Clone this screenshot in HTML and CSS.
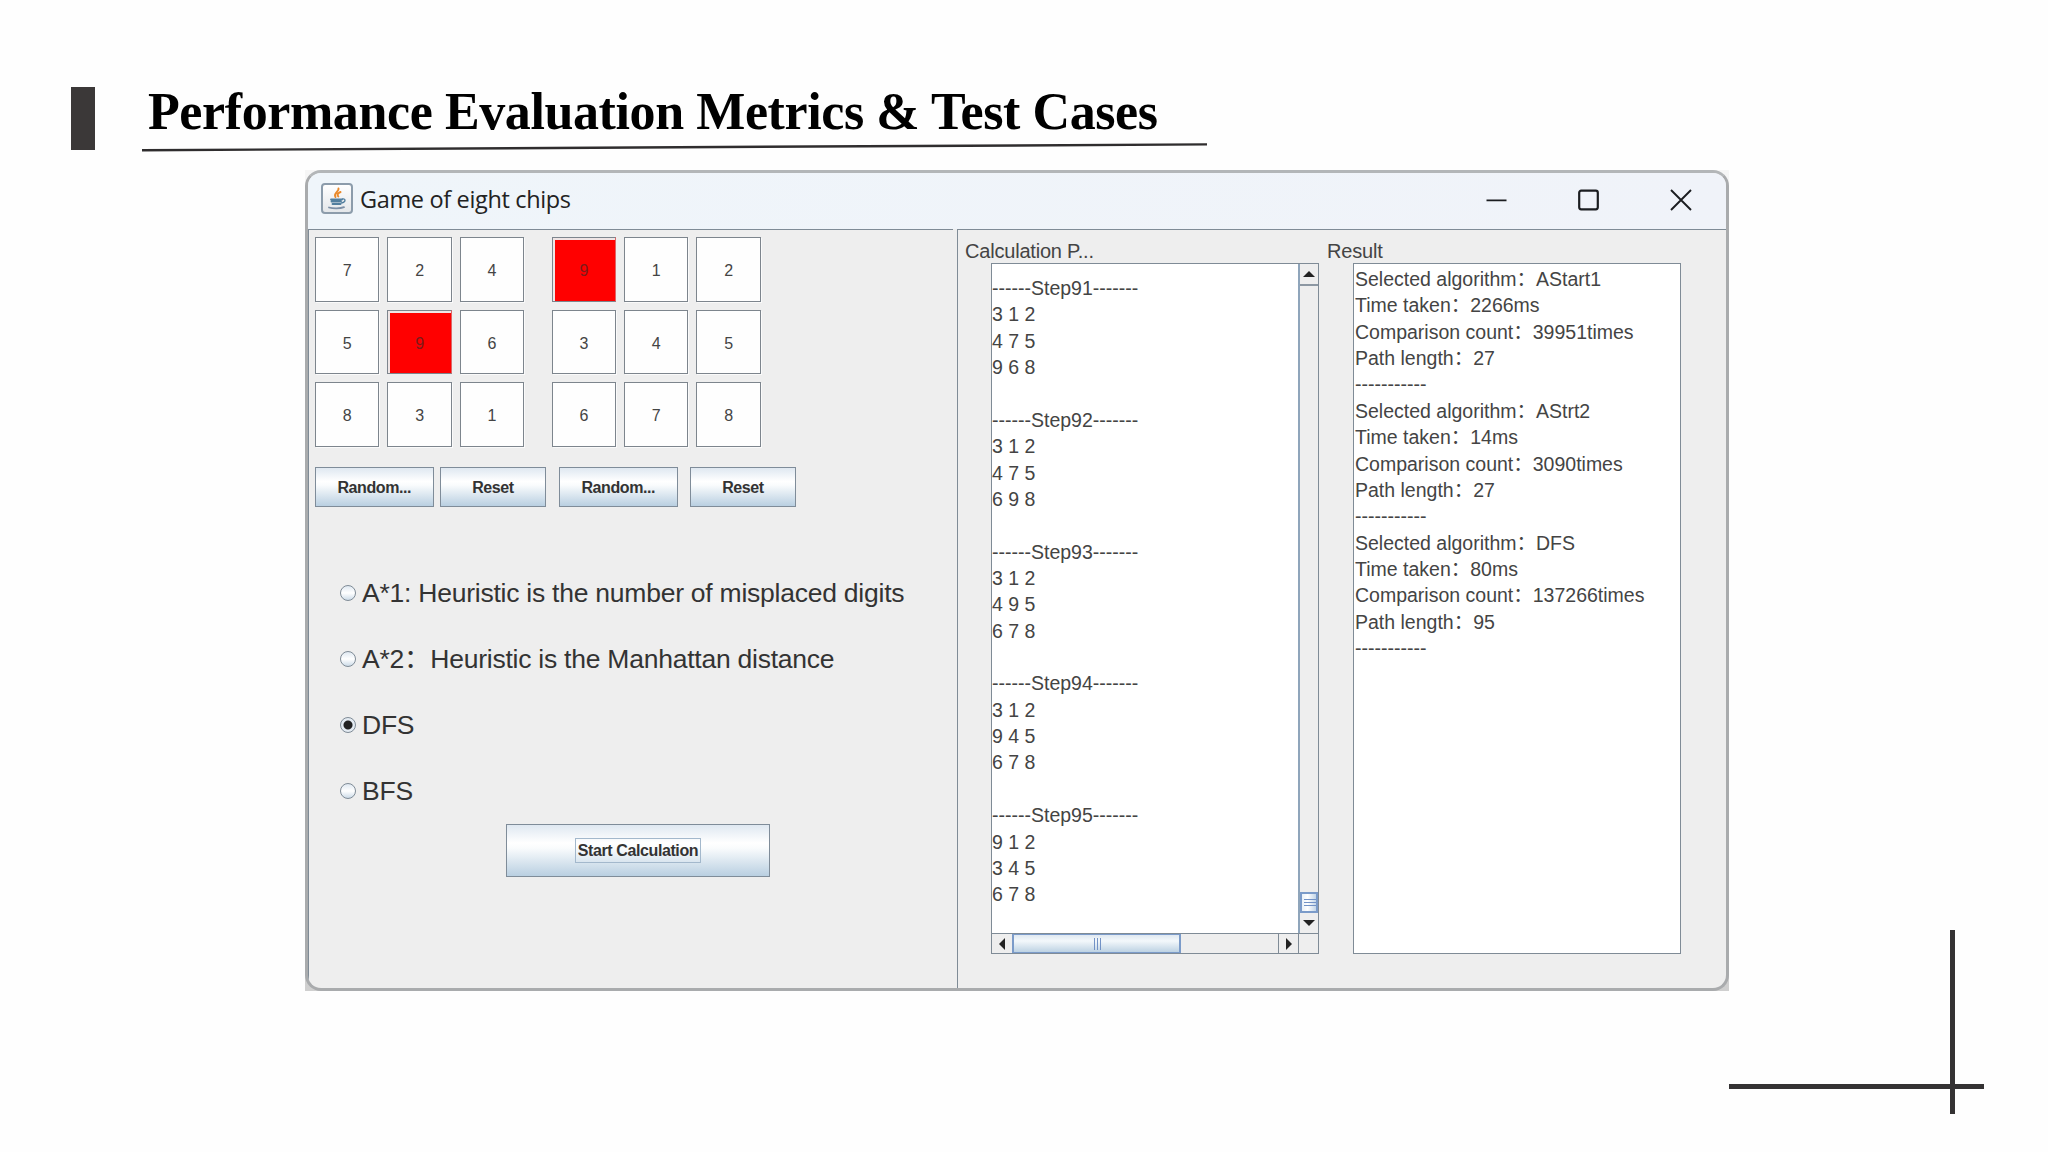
FILE: index.html
```html
<!DOCTYPE html>
<html lang="en">
<head>
  <meta charset="UTF-8" />
  <meta name="viewport" content="width=device-width, initial-scale=1.0" />
  <title>Performance Evaluation Metrics &amp; Test Cases</title>
  <link rel="stylesheet" href="styles.css">
</head>
<body>
  <div class="slide">
    <header class="heading">
      <div class="heading-bar"></div>
      <div class="heading-text">
        <h1>Performance Evaluation Metrics &amp; Test Cases</h1>
        <svg class="underline" width="1066" height="9" viewBox="0 0 1066 9">
          <line x1="0" y1="7.2" x2="1065" y2="1.4" stroke="#2f2d2e" stroke-width="2.4" />
        </svg>
      </div>
    </header>

    <div class="window-frame">
      <div class="window">
        <div class="title-bar">
          <div class="java-icon">
            <svg width="26" height="26" viewBox="0 0 26 26" fill="none" stroke-linecap="round">
              <path d="M14.5 2.5c1 3-5.5 4.5-3 8.5M16.5 6c-3 1.2-3.6 2.5-2.2 4.5" stroke="#ea8a2c" stroke-width="2" />
              <path d="M7 13.5h11M7.5 15.5h9.5M8.5 18h8" stroke="#527f9f" stroke-width="1.8" />
              <path d="M18.5 13c3.5-.8 3.5 3.2-1 4" stroke="#527f9f" stroke-width="1.3" />
              <path d="M5 21.5c4 1.2 11 1.2 15-.3" stroke="#7c8fa6" stroke-width="1.8" />
            </svg>
          </div>
          <div class="title">Game of eight chips</div>
          <div class="window-buttons">
            <svg width="22" height="22" viewBox="0 0 22 22"><path d="M1.5 11.3h20" stroke="#1b1d20" stroke-width="1.8" /></svg>
            <svg width="22" height="22" viewBox="0 0 22 22"><rect x="1.2" y="1.7" width="18.6" height="18.6" rx="2" fill="none" stroke="#1b1d20" stroke-width="2.2" /></svg>
            <svg width="22" height="22" viewBox="0 0 22 22"><path d="M1 1l20 20M21 1l-20 20" stroke="#1b1d20" stroke-width="1.9" /></svg>
          </div>
        </div>

        <div class="panels">
          <div class="panel left-panel">
            <div class="boards">
              <div class="board">
                <div class="tile">7</div><div class="tile">2</div><div class="tile">4</div>
                <div class="tile">5</div><div class="tile empty">9</div><div class="tile">6</div>
                <div class="tile">8</div><div class="tile">3</div><div class="tile">1</div>
              </div>
              <div class="board">
                <div class="tile empty">9</div><div class="tile">1</div><div class="tile">2</div>
                <div class="tile">3</div><div class="tile">4</div><div class="tile">5</div>
                <div class="tile">6</div><div class="tile">7</div><div class="tile">8</div>
              </div>
            </div>

            <div class="board-buttons">
              <button class="random">Random...</button>
              <button class="reset">Reset</button>
              <button class="random second">Random...</button>
              <button class="reset last">Reset</button>
            </div>

            <div class="options">
              <div class="option"><i class="radio"></i><span>A*1: Heuristic is the number of misplaced digits</span></div>
              <div class="option"><i class="radio"></i><span>A*2：Heuristic is the Manhattan distance</span></div>
              <div class="option"><i class="radio checked"></i><span>DFS</span></div>
              <div class="option"><i class="radio"></i><span>BFS</span></div>
            </div>

            <button class="start"><span>Start Calculation</span></button>
          </div>

          <div class="panel right-panel">
            <div class="column">
              <div class="label">Calculation P...</div>
              <div class="scroll-box">
                <pre class="steps">------Step91-------
3 1 2
4 7 5
9 6 8

------Step92-------
3 1 2
4 7 5
6 9 8

------Step93-------
3 1 2
4 9 5
6 7 8

------Step94-------
3 1 2
9 4 5
6 7 8

------Step95-------
9 1 2
3 4 5
6 7 8</pre>
                <div class="v-scroll">
                  <div class="arrow up"><svg width="12" height="6" viewBox="0 0 12 6"><path d="M6 0l6 6h-12z" fill="#222" /></svg></div>
                  <div class="v-track"></div>
                  <div class="v-thumb"></div>
                  <div class="arrow down"><svg width="12" height="6" viewBox="0 0 12 6"><path d="M6 6l6-6h-12z" fill="#222" /></svg></div>
                </div>
                <div class="h-scroll">
                  <div class="arrow"><svg width="6" height="12" viewBox="0 0 6 12"><path d="M0 6l6-6v12z" fill="#222" /></svg></div>
                  <div class="h-thumb"></div>
                  <div class="h-track"></div>
                  <div class="arrow right"><svg width="6" height="12" viewBox="0 0 6 12"><path d="M6 6l-6-6v12z" fill="#222" /></svg></div>
                </div>
                <div class="scroll-corner"></div>
              </div>
            </div>

            <div class="column">
              <div class="label">Result</div>
              <pre class="result">Selected algorithm：AStart1
Time taken：2266ms
Comparison count：39951times
Path length：27
-----------
Selected algorithm：AStrt2
Time taken：14ms
Comparison count：3090times
Path length：27
-----------
Selected algorithm：DFS
Time taken：80ms
Comparison count：137266times
Path length：95
-----------</pre>
            </div>
          </div>
        </div>
      </div>
    </div>

    <div class="corner-line vertical"></div>
    <div class="corner-line horizontal"></div>
  </div>
</body>
</html>
```
FILE: styles.css
```css
* {
  box-sizing: border-box;
}
body {
  margin: 0;
  background: #fefefe;
  font-family: "Liberation Sans", "Noto Sans CJK SC", Arial, sans-serif;
  color: #444;
}
.slide {
  position: relative;
  width: 2048px;
  height: 1152px;
  overflow: hidden;
}

/* heading */
.heading {
  display: flex;
  height: 170px;
  padding: 87px 0 0 71px;
}
.heading-bar {
  width: 24px;
  height: 63px;
  background: #3b3838;
}
.heading-text {
  margin-left: 47px;
}
h1 {
  margin: 0;
  padding-left: 6px;
  height: 56px;
  font-family: "Liberation Serif", "Times New Roman", serif;
  font-size: 52px;
  letter-spacing: -0.4px;
  line-height: 49px;
  color: #000;
  white-space: nowrap;
}
.underline {
  display: block;
}

/* application window */
.window-frame {
  width: 1424px;
  height: 821px;
  margin-left: 305px;
  background: linear-gradient(#f6f6f6, #cfcfcf);
}
.window {
  height: 100%;
  border: 3px solid #a9abad;
  border-top-color: #b3b6b8;
  border-radius: 16px;
  background: #eee;
  overflow: hidden;
}
.title-bar {
  display: flex;
  align-items: center;
  height: 56px;
  padding: 0 34px 3px 13px;
  background: linear-gradient(90deg, #eff5fa, #f0f3f9);
}
.java-icon {
  display: flex;
  align-items: center;
  justify-content: center;
  width: 32px;
  height: 31px;
  margin-bottom: 2px;
  border: 2px solid #8c9cab;
  border-radius: 4px;
  background: linear-gradient(#fff, #e4e7ea);
}
.title {
  margin: 0 0 2px 7px;
  font-family: "Open Sans", "Noto Sans", sans-serif;
  font-size: 23.5px;
  letter-spacing: -0.35px;
  line-height: 32px;
  color: #222;
}
.window-buttons {
  display: flex;
  gap: 70.5px;
  margin-left: auto;
}

.panels {
  display: flex;
  height: 759px;
  gap: 4px;
}
.panel {
  border-top: 1px solid #7f8b96;
  border-left: 1px solid #7f8b96;
}
.left-panel {
  width: 645px;
  padding: 7px 0 0 6px;
}

/* boards */
.boards {
  display: flex;
  gap: 27.5px;
}
.board {
  display: grid;
  grid-template-columns: repeat(3, 64.4px);
  grid-auto-rows: 64.5px;
  gap: 8px;
}
.tile {
  display: flex;
  align-items: center;
  justify-content: center;
  border: 1px solid #7d858d;
  box-shadow: 1px 1px 0 #fafafa;
  padding-top: 4px;
  background: #fefefe;
  font-size: 16px;
}
.empty {
  border-right-color: #d66;
  box-shadow: inset 2px 2px 0 #efe5e5;
  background: #f00;
  color: #7c1b1b;
}

/* buttons */
button {
  border: 1px solid #7f8c99;
  border-radius: 0;
  padding: 2px 0 0;
  background: linear-gradient(#dfe8f1, #fff 35%, #fafcfd 45%, #b9cfe1);
  font-family: inherit;
  font-weight: bold;
  font-size: 16px;
  letter-spacing: -0.4px;
  color: #333;
}
.board-buttons {
  display: flex;
  margin-top: 20.5px;
}
.board-buttons button {
  height: 40px;
}
.random {
  width: 118.5px;
}
.reset {
  width: 106px;
  margin-left: 6.5px;
}
.second {
  margin-left: 13px;
}
.reset.last {
  margin-left: 12.5px;
}
.start {
  display: block;
  width: 264px;
  height: 53px;
  margin: 0 0 0 191px;
  padding: 0;
}
.start span {
  display: inline-block;
  padding: 1px 2px;
  border: 1px solid #a3b8cc;
  line-height: 21px;
  white-space: nowrap;
}

/* radio options */
.options {
  margin-top: 53px;
}
.option {
  display: flex;
  align-items: center;
  height: 65.9px;
  padding-left: 25px;
  font-size: 26.5px;
  letter-spacing: -0.24px;
  line-height: 29px;
  color: #333;
  white-space: pre;
}
.option span {
  height: 28px;
}
.radio {
  width: 16px;
  height: 16px;
  margin-right: 6px;
  border: 1px solid #7f8b96;
  border-radius: 50%;
  background: linear-gradient(#dfe8f1, #fff 50%, #ccdbe8);
}
.checked {
  background: radial-gradient(circle, #222 0 4px, #e4ebf2 5px);
}

/* right side */
.right-panel {
  display: flex;
  flex: 1;
  gap: 34px;
  padding: 12px 0 0 7px;
}
.column {
  width: 328px;
}
.label {
  height: 21px;
  font-size: 20px;
  letter-spacing: -0.2px;
  line-height: 18px;
  white-space: nowrap;
}
.scroll-box, .result {
  width: 328px;
  height: 691px;
  margin: 0 0 0 26px;
  border: 1px solid #7f8b96;
  background: #fff;
}
pre {
  margin: 0;
  font-family: inherit;
  font-size: 19.5px;
  line-height: 26.36px;
}
.result {
  padding: 2px 0 0 1px;
}
.scroll-box {
  display: grid;
  grid-template-columns: 1fr 20px;
  grid-template-rows: 1fr 20px;
}
.steps {
  padding: 11px 0 0 0;
}
.v-scroll {
  display: flex;
  flex-direction: column;
  border-left: 2px solid #8fa5bb;
  background: #eee;
}
.arrow {
  display: flex;
  align-items: center;
  justify-content: center;
  width: 20px;
  height: 20px;
}
.up {
  width: 18px;
  height: 22px;
  border-bottom: 2px solid #8c97a2;
}
.down {
  width: 18px;
}
.v-track {
  flex: 1;
}
.v-thumb {
  height: 21px;
  border: 2px solid #7b9bc9;
  background: linear-gradient(#7292c6, #7292c6) 2px 5px / 12px 1px no-repeat,
    linear-gradient(#7292c6, #7292c6) 2px 8px / 12px 1px no-repeat,
    linear-gradient(#7292c6, #7292c6) 2px 11px / 12px 1px no-repeat,
    linear-gradient(90deg, #e9f1f8, #fff 40%, #c3d6e8);
}
.h-scroll {
  display: flex;
  border-top: 1px solid #7f8b96;
  background: #eee;
}
.h-thumb {
  width: 169px;
  border: 2px solid #7b9bc9;
  border-width: 1px 2px;
  background: linear-gradient(#7292c6, #7292c6) 80px 3px / 1px 12px no-repeat,
    linear-gradient(#7292c6, #7292c6) 83px 3px / 1px 12px no-repeat,
    linear-gradient(#7292c6, #7292c6) 86px 3px / 1px 12px no-repeat,
    linear-gradient(#dfe8f1, #f3f8fb 35%, #bdd2e3);
}
.h-track {
  flex: 1;
}
.right {
  border-left: 1px solid #7f8b96;
}
.scroll-corner {
  border: solid #7f8b96;
  border-width: 1px 0 0 1px;
  background: #eee;
}

/* crossing lines in the slide corner */
.corner-line {
  position: absolute;
  background: #343233;
}
.vertical {
  left: 1950px;
  top: 930px;
  width: 5px;
  height: 184px;
}
.horizontal {
  left: 1729px;
  top: 1084px;
  width: 255px;
  height: 5px;
}
```
